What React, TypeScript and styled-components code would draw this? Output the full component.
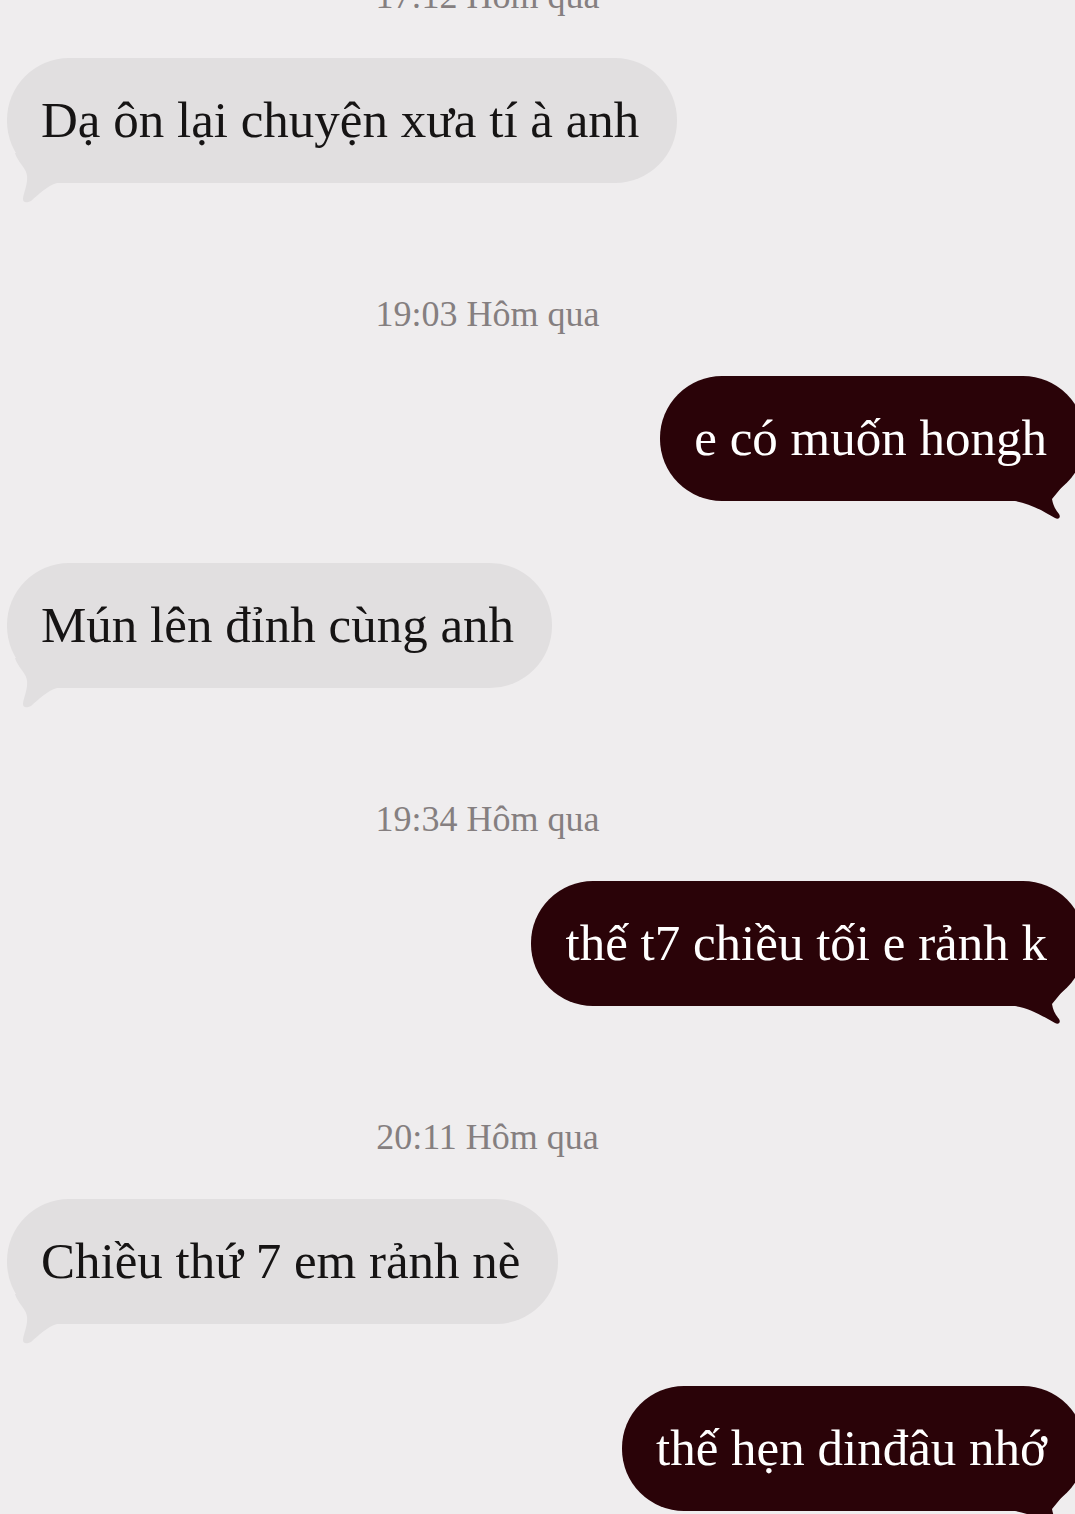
import React from "react";
import styled, { createGlobalStyle } from "styled-components";

const GlobalStyle = createGlobalStyle`
  html, body {
    margin: 0;
    padding: 0;
    background: #efedee;
    overflow-x: hidden;
  }
`;

const Thread = styled.div`
  display: flex;
  flex-direction: column;
  padding-left: 7px;
  font-family: "Liberation Serif", "Times New Roman", serif;
  min-height: 1514px;
`;

const Stamp = styled.div<{ $first?: boolean }>`
  height: 40px;
  line-height: 40px;
  margin: ${(p) => (p.$first ? "-24px" : "111px")} 107px 42px 0;
  text-align: center;
  font-size: 36px;
  color: #857f80;
  white-space: nowrap;
`;

const Bubble = styled.div<{ $mine?: boolean; $spaced?: boolean }>`
  position: relative;
  align-self: ${(p) => (p.$mine ? "flex-end" : "flex-start")};
  margin-top: ${(p) => (p.$spaced ? "62px" : "0")};
  margin-right: ${(p) => (p.$mine ? "-10px" : "0")};
  padding: 35px 38px 35px 34px;
  line-height: 55px;
  font-size: 51px;
  border-radius: 62px;
  white-space: nowrap;
  background: ${(p) => (p.$mine ? "#2a0308" : "#e1dfe0")};
  color: ${(p) => (p.$mine ? "#ffffff" : "#161414")};
`;

const Tail = styled.svg<{ $mine?: boolean }>`
  position: absolute;
  bottom: -20px;
  width: 70px;
  height: 50px;
  ${(p) => (p.$mine ? "right: 0;" : "left: 0;")}
`;

type Item = { kind: "time" | "in" | "out"; text: string };

const items: Item[] = [
  { kind: "time", text: "17:12 Hôm qua" },
  { kind: "in", text: "Dạ ôn lại chuyện xưa tí à anh" },
  { kind: "time", text: "19:03 Hôm qua" },
  { kind: "out", text: "e có muốn hongh" },
  { kind: "in", text: "Mún lên đỉnh cùng anh" },
  { kind: "time", text: "19:34 Hôm qua" },
  { kind: "out", text: "thế t7 chiều tối e rảnh k" },
  { kind: "time", text: "20:11 Hôm qua" },
  { kind: "in", text: "Chiều thứ 7 em rảnh nè" },
  { kind: "out", text: "thế hẹn dinđâu nhớ" },
];

const InTail = () => (
  <Tail viewBox="0 0 70 50">
    <path
      d="M8 0 C12 12, 22 16, 20 28 C19 36, 16 42, 16 46 C16 50, 20 50, 24 48 C32 41, 40 33, 50 30 L70 30 L70 0 Z"
      fill="#e1dfe0"
    />
  </Tail>
);

const OutTail = () => (
  <Tail $mine viewBox="0 0 70 50">
    <path
      d="M0 0 L0 30 C14 32, 28 40, 40 47 C44 49, 46 46, 44 43 C40 38, 38 34, 37 28 L60 0 Z"
      fill="#2a0308"
    />
  </Tail>
);

const App: React.FC = () => (
  <>
    <GlobalStyle />
    <Thread>
      {items.map((item, i) => {
        if (item.kind === "time") {
          return (
            <Stamp key={i} $first={i === 0}>
              {item.text}
            </Stamp>
          );
        }
        const spaced = i > 0 && items[i - 1].kind !== "time";
        const mine = item.kind === "out";
        return (
          <Bubble key={i} $mine={mine} $spaced={spaced}>
            {item.text}
            {mine ? <OutTail /> : <InTail />}
          </Bubble>
        );
      })}
    </Thread>
  </>
);

export default App;
